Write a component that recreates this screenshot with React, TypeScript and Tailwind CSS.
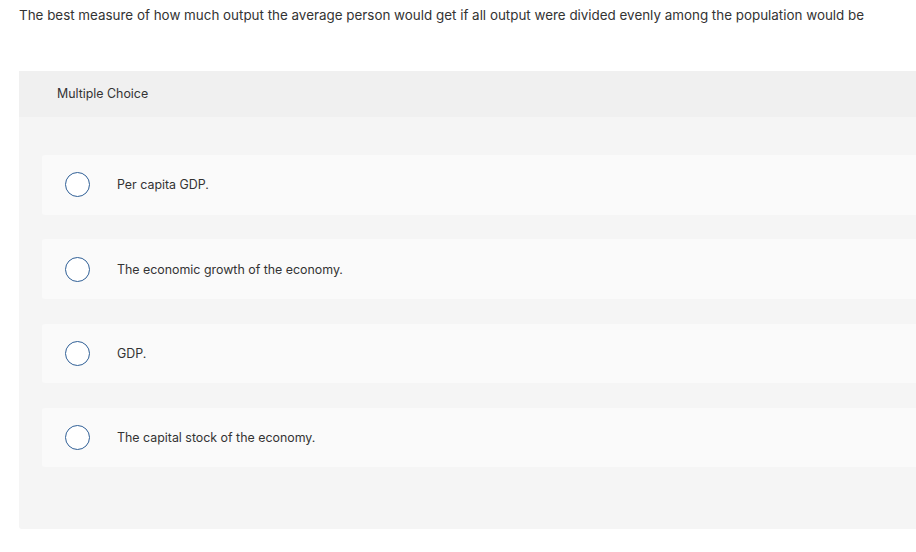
const options = [
  "Per capita GDP.",
  "The economic growth of the economy.",
  "GDP.",
  "The capital stock of the economy.",
];

function Radio() {
  return (
    <span className="block h-[25px] w-[25px] shrink-0 rounded-full border-[1.5px] border-[#2f5f96] bg-white" />
  );
}

export default function App() {
  return (
    <div
      className="h-[552px] w-[916px] overflow-hidden bg-white text-[#333333]"
      style={{ fontFamily: "Inter, 'Open Sans', sans-serif" }}
    >
      <p className="px-[19px] pt-[6px] text-[13.4px] leading-[18px] text-[#333]">
        The best measure of how much output the average person would get if all output were divided evenly among the
        population would be
      </p>

      <div className="ml-[19px] mt-[47px] overflow-hidden rounded-bl-[3px] bg-[#f5f5f5]">
        <div className="flex h-[46px] items-center bg-[#f0f0f0] pl-[38px] text-[12.4px] text-[#333]">
          Multiple Choice
        </div>
        <div className="flex flex-col gap-[24.75px] pb-[62px] pl-[23px] pt-[38px]">
          {options.map((o) => (
            <div key={o} className="flex h-[59.5px] items-center rounded-l-[3px] bg-[#fafafa] pl-[23px]">
              <Radio />
              <span className="ml-[27px] mt-[2px] text-[12.4px] text-[#333]">{o}</span>
            </div>
          ))}
        </div>
      </div>
    </div>
  );
}
